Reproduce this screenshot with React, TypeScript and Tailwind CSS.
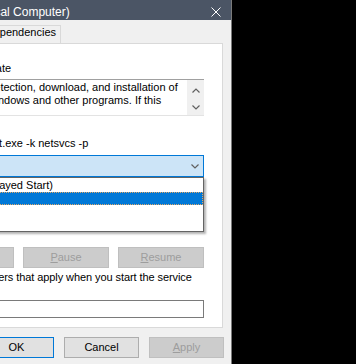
const Chevron = ({ up = false }: { up?: boolean }) => (
  <svg width="8" height="5" viewBox="0 0 8 5" className="block">
    <path
      d={up ? "M0.5 4.5 L4 1 L7.5 4.5" : "M0.5 0.5 L4 4 L7.5 0.5"}
      fill="none"
      stroke="#606060"
      strokeWidth="1.2"
    />
  </svg>
);

const Tab = ({ label, active = false }: { label: string; active?: boolean }) =>
  active ? (
    <div className="relative z-10 -mx-[2px] mb-[-1px] h-[21px] shrink-0 border border-b-0 border-[#d9d9d9] bg-white px-[6px] pt-[2px]">
      {label}
    </div>
  ) : (
    <div className="h-[18px] shrink-0 border border-b-0 border-[#d9d9d9] bg-[#f0f0f0] px-[4px]">{label}</div>
  );

const Button = ({
  children,
  disabled = false,
  primary = false,
  width = "w-[86px]",
}: {
  children: React.ReactNode;
  disabled?: boolean;
  primary?: boolean;
  width?: string;
}) => {
  let look = "border-[#adadad] bg-[#e1e1e1] text-black";
  if (disabled) look = "border-[#bfbfbf] bg-[#cccccc] text-[#9d9d9d]";
  if (primary) look = "border-[#0078d7] bg-[#e1e1e1] text-black";
  return (
    <div className={`flex h-[21px] shrink-0 items-center justify-center border ${width} ${look}`}>{children}</div>
  );
};

const Row = ({ label, children }: { label: string; children?: React.ReactNode }) => (
  <div className="flex h-[13px] shrink-0 whitespace-nowrap">
    <div className="w-[86px] shrink-0">{label}</div>
    <div className="pl-[4px]">{children}</div>
  </div>
);

export default function App() {
  return (
    <div className="flex h-[364px] w-[356px] overflow-hidden bg-black font-['Liberation_Sans',Arial,sans-serif] text-[11px] leading-[13px] text-black">
      <div className="ml-[-181px] flex h-[400px] w-[413px] shrink-0 flex-col border-r border-[#7a7a7a] bg-[#f0f0f0]">
        {/* title bar */}
        <div className="flex h-[20px] shrink-0 items-center justify-between bg-[#4b5565] pl-[6px] pr-[10px] pt-[4px] text-[12px] leading-[14px] text-white">
          <span className="whitespace-nowrap">Windows Update Properties (Local Computer)</span>
          <svg width="10" height="10" viewBox="0 0 10 10" className="block">
            <path d="M0.5 0.5 L9.5 9.5 M9.5 0.5 L0.5 9.5" stroke="#ffffff" strokeWidth="1" />
          </svg>
        </div>

        {/* tabs */}
        <div className="flex h-[23px] shrink-0 items-end whitespace-nowrap pl-[10px]">
          <Tab label="General" active />
          <Tab label="Log On" />
          <Tab label="Recovery" />
          <Tab label="Dependencies" />
        </div>

        {/* tab page */}
        <div className="mx-[8px] flex h-[285px] shrink-0 flex-col border border-[#d9d9d9] bg-white pl-[10px] pr-[18px] pt-[2px]">
          <Row label="Service name:">wuauserv</Row>
          <div className="mt-[3px]">
            <Row label="Display name:">Windows Update</Row>
          </div>

          <div className="mt-[4px] flex h-[37px] shrink-0">
            <div className="w-[86px] shrink-0 pt-[2px]">Description:</div>
            <div className="flex flex-1 border border-r-0 border-[#e3e3e3] border-t-[#a0a0a0]">
              <div className="flex-1 overflow-hidden whitespace-nowrap pl-[2px] pt-[1px]">
                <div>Enables the detection, download, and installation of</div>
                <div>updates for Windows and other programs. If this</div>
              </div>
              <div className="flex w-[17px] shrink-0 flex-col items-center gap-[12px] bg-[#f0f0f0] pt-[8px]">
                <Chevron up />
                <Chevron />
              </div>
            </div>
          </div>

          <div className="mt-[5px] h-[13px] shrink-0 whitespace-nowrap">Path to executable:</div>
          <div className="ml-[4px] mt-[3px] h-[13px] shrink-0 whitespace-nowrap">
            {"C:\\WINDOWS\\system32\\svchost.exe -k netsvcs -p"}
          </div>

          <div className="mt-[5px] flex h-[22px] shrink-0 items-center whitespace-nowrap">
            <div className="w-[86px] shrink-0">Startup type:</div>
            <div className="relative flex h-[22px] flex-1 items-center justify-between border border-[#0078d7] bg-[#cce4f7] pl-[2px] pr-[4px]">
              <span>Automatic</span>
              <Chevron />
              {/* open list */}
              <div className="absolute left-[-1px] right-[-1px] top-[21px] z-20 border border-[#646464] bg-white pt-[1px] shadow-[2px_2px_2px_rgba(0,0,0,0.3)]">
                <div className="h-[13px] pl-[2px]">Automatic (Delayed Start)</div>
                <div className="h-[13px] bg-[#0078d7] pl-[2px] text-white outline-1 outline-dotted -outline-offset-1 outline-[#e0a868]">
                  Automatic
                </div>
                <div className="h-[13px] pl-[2px]">Manual</div>
                <div className="h-[13px] pl-[2px]">Disabled</div>
              </div>
            </div>
          </div>

          <div className="mt-[20px] shrink-0 border-b border-t border-b-white border-t-[#a0a0a0]" />
          <div className="mt-[34px]">
            <Row label="Service status:">Stopped</Row>
          </div>

          <div className="mt-[1px] flex shrink-0 justify-end gap-[9px]">
            <Button>
              <u>S</u>tart
            </Button>
            <Button disabled>
              S<u>t</u>op
            </Button>
            <Button disabled>
              <u>P</u>ause
            </Button>
            <Button disabled>
              <u>R</u>esume
            </Button>
          </div>

          <div className="mt-[3px] shrink-0 whitespace-nowrap tracking-[-0.08px]">
            <div>You can specify the start parameters that apply when you start the service</div>
            <div>from here.</div>
          </div>

          <div className="mt-[3px] flex h-[18px] shrink-0 items-center whitespace-nowrap">
            <div className="w-[86px] shrink-0">Start para<u>m</u>eters:</div>
            <div className="h-[18px] flex-1 border border-[#7a7a7a] bg-white" />
          </div>
        </div>

        {/* dialog buttons */}
        <div className="mt-[9px] flex shrink-0 justify-end gap-[10px] pr-[7px]">
          <Button primary width="w-[75px]">
            OK
          </Button>
          <Button width="w-[75px]">Cancel</Button>
          <Button disabled width="w-[75px]">
            <u>A</u>pply
          </Button>
        </div>
      </div>
    </div>
  );
}
